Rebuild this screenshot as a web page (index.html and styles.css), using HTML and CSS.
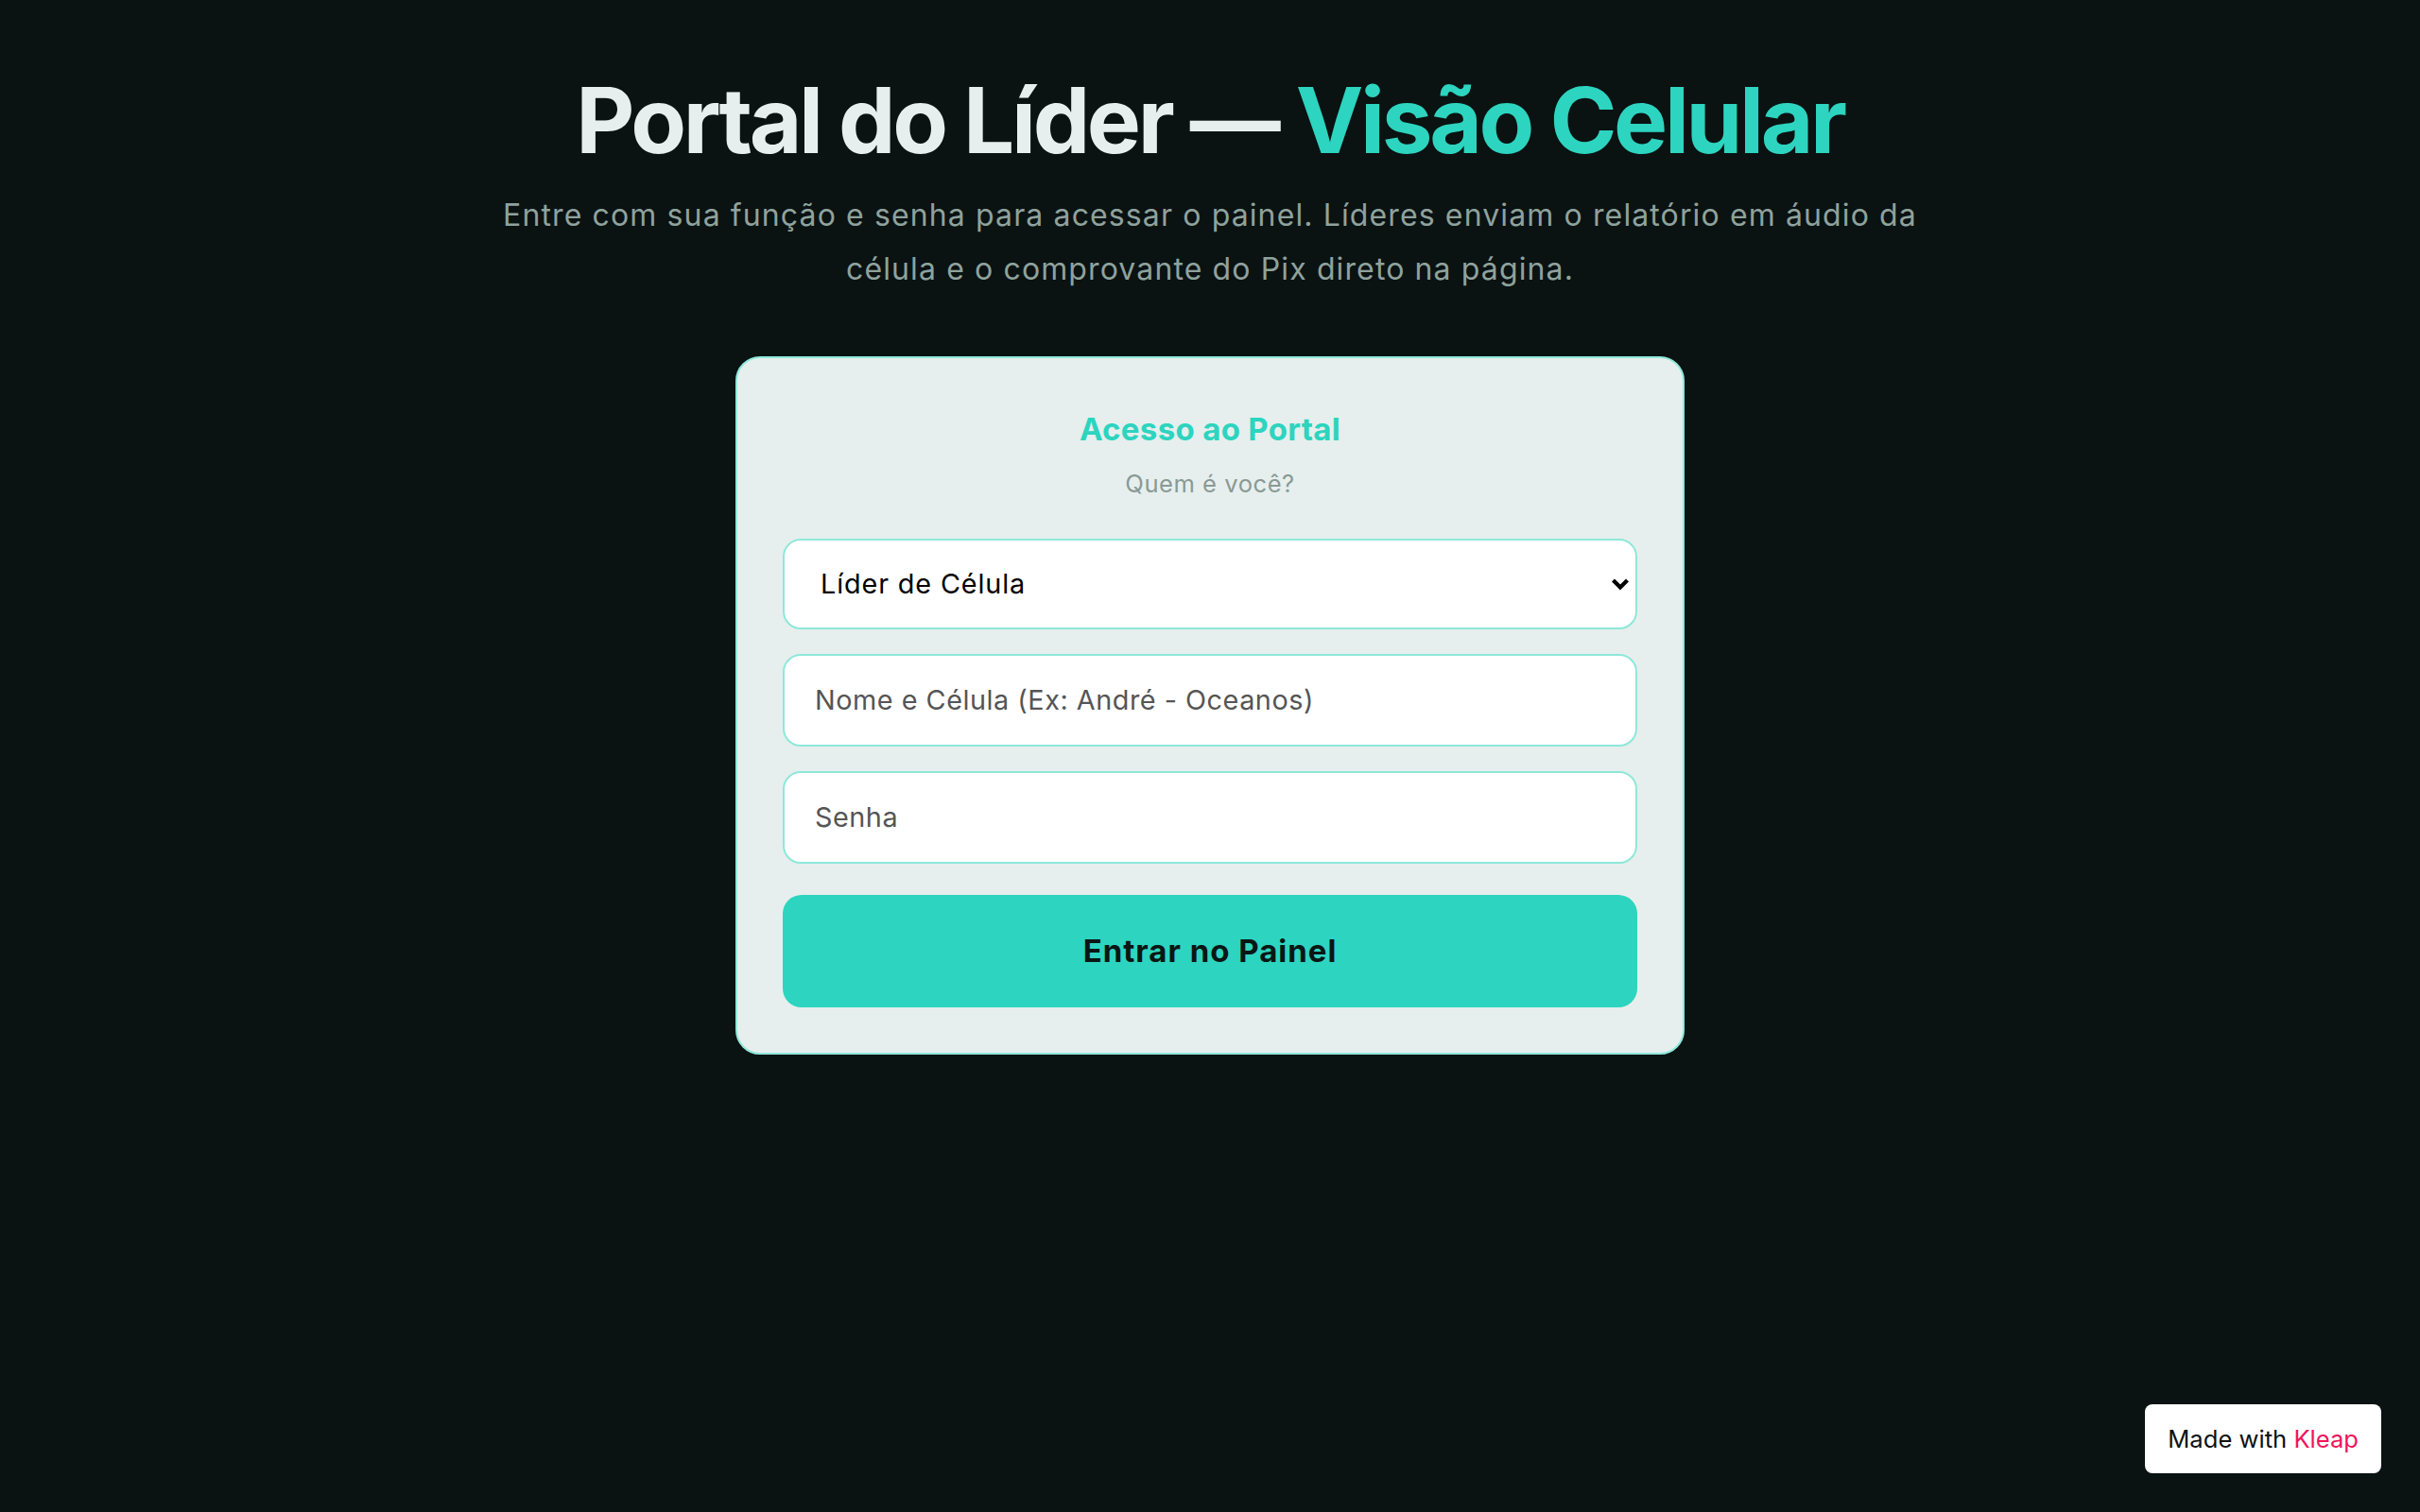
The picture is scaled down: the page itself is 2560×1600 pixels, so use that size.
FILE: index.html
```html
<!DOCTYPE html>
<html lang="pt-BR">
<head>
<meta charset="utf-8">
<title>Portal do Líder — Visão Celular</title>
<link rel="stylesheet" href="styles.css">
</head>
<body>
<main class="page">
  <header class="hero">
    <h1 class="hero-title">Portal do Líder — <span class="accent">Visão Celular</span></h1>
    <p class="hero-sub">Entre com sua função e senha para acessar o painel. Líderes enviam o relatório em áudio da célula e o comprovante do Pix direto na página.</p>
  </header>

  <section class="card">
    <h2 class="card-title">Acesso ao Portal</h2>
    <p class="card-sub">Quem é você?</p>
    <form class="form">
      <div class="select-wrap">
        <select class="field select">
          <option>Líder de Célula</option>
          <option>Supervisor</option>
          <option>Pastor</option>
        </select>
        <svg class="chev" width="20" height="14" viewBox="0 0 20 14" aria-hidden="true"><path d="M2.5 3 L10 10.5 L17.5 3" fill="none" stroke="#000" stroke-width="4.2" stroke-linecap="butt" stroke-linejoin="miter"/></svg>
      </div>
      <input class="field" type="text" placeholder="Nome e Célula (Ex: André - Oceanos)">
      <input class="field" type="password" placeholder="Senha">
      <button class="btn" type="button">Entrar no Painel</button>
    </form>
  </section>
</main>

<a class="badge" href="#">Made with <span class="badge-brand">Kleap</span></a>
</body>
</html>
```

FILE: styles.css
```css
* { box-sizing: border-box; }

html, body {
  margin: 0;
  padding: 0;
  background: #0a1212;
  min-height: 100%;
}

body {
  font-family: "Inter", "Liberation Sans", sans-serif;
  color: #e6efed;
}

.page {
  display: flex;
  flex-direction: column;
  align-items: center;
  padding-top: 75px;
}

.hero {
  display: flex;
  flex-direction: column;
  align-items: center;
  text-align: center;
}

.hero-title {
  margin: 0;
  font-size: 96px;
  line-height: 1.1;
  font-weight: 700;
  letter-spacing: -0.035em;
  color: #e6efed;
}

.accent { color: #2dd4bf; }

.hero-sub {
  margin: 18px 0 0;
  max-width: 1520px;
  font-size: 32px;
  line-height: 1.8;
  letter-spacing: 0.035em;
  color: #8fa29d;
}

.card {
  margin-top: 63px;
  width: 1004px;
  background: #e6efed;
  border: 2px solid #8ee8da;
  border-radius: 26px;
  padding: 48px;
  display: flex;
  flex-direction: column;
  align-items: stretch;
  text-align: center;
}

.card-title {
  margin: 8px 0 0;
  font-size: 33px;
  line-height: 1.2;
  font-weight: 700;
  letter-spacing: 0.01em;
  color: #2dd4bf;
}

.card-sub {
  margin: 19px 0 0;
  font-size: 25.6px;
  line-height: 1.5;
  letter-spacing: 0.02em;
  color: #8a9995;
}

.form {
  margin-top: 38px;
  display: flex;
  flex-direction: column;
  gap: 26px;
}

.field {
  display: block;
  width: 100%;
  height: 98px;
  padding: 0 32px;
  font-family: inherit;
  font-size: 28.8px;
  letter-spacing: 0.018em;
  color: #111;
  background: #fff;
  border: 2px solid #8ee8da;
  border-radius: 19px;
  outline: none;
}

.field::placeholder { color: #555; }

.select-wrap { position: relative; }

.select {
  height: 96px;
  padding-left: 38px;
  -webkit-appearance: none;
  appearance: none;
  color: #000;
  letter-spacing: 0.03em;
}

.chev {
  position: absolute;
  right: 8px;
  top: 41px;
  pointer-events: none;
}

.btn {
  margin-top: 7px;
  height: 119px;
  width: 100%;
  border: none;
  border-radius: 20px;
  background: #2dd4bf;
  color: #0a1614;
  font-family: inherit;
  font-size: 33px;
  font-weight: 700;
  letter-spacing: 0.03em;
  cursor: pointer;
}

.badge {
  position: fixed;
  right: 41px;
  bottom: 41px;
  height: 73px;
  padding: 0 24px;
  display: flex;
  align-items: center;
  background: #fff;
  border-radius: 8px;
  font-family: "Inter", "Liberation Sans", sans-serif;
  font-size: 25.6px;
  color: #111;
  text-decoration: none;
  white-space: pre;
}

.badge-brand { color: #f0145a; }
```
